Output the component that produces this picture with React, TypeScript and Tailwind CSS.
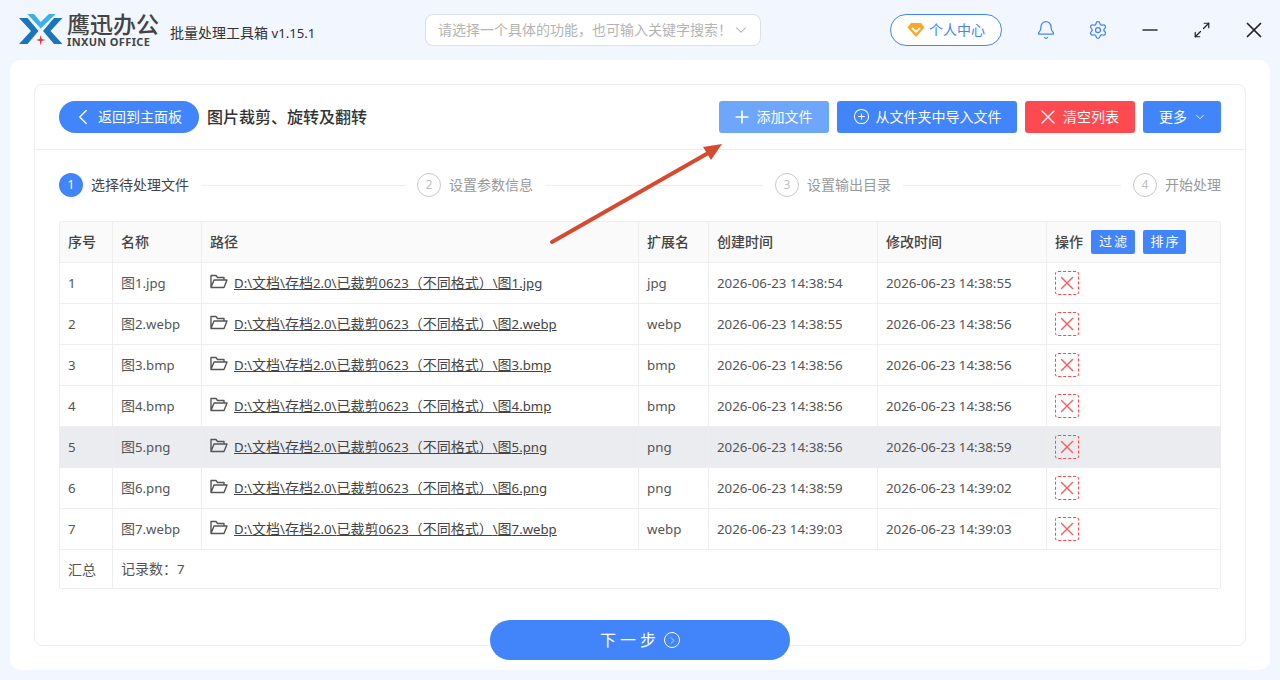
import { Bell, ChevronDown, ChevronLeft, CirclePlus, Maximize2, Minus, Plus, Settings, X, ChevronRight } from "lucide-react";

const rows = [
  ["1", "图1.jpg", "jpg", "2026-06-23 14:38:54", "2026-06-23 14:38:55"],
  ["2", "图2.webp", "webp", "2026-06-23 14:38:55", "2026-06-23 14:38:56"],
  ["3", "图3.bmp", "bmp", "2026-06-23 14:38:56", "2026-06-23 14:38:56"],
  ["4", "图4.bmp", "bmp", "2026-06-23 14:38:56", "2026-06-23 14:38:56"],
  ["5", "图5.png", "png", "2026-06-23 14:38:56", "2026-06-23 14:38:59"],
  ["6", "图6.png", "png", "2026-06-23 14:38:59", "2026-06-23 14:39:02"],
  ["7", "图7.webp", "webp", "2026-06-23 14:39:03", "2026-06-23 14:39:03"],
];

const gridCols = "grid grid-cols-[53px_89px_437px_70px_169px_169px_1fr]";
const cell = "flex items-center px-2 border-r border-[#eeeeee] last:border-r-0 min-w-0 whitespace-nowrap";

function Mix({ text }: { text: string }) {
  const parts = text.split(/([\u3000-\u9fff\uff00-\uffef]+)/).filter(Boolean);
  return (
    <>
      {parts.map((p, i) =>
        /[\u3000-\u9fff\uff00-\uffef]/.test(p) ? (
          <span key={i} className="text-[14px]">{p}</span>
        ) : (
          <span key={i} className="text-[13.2px]">{p}</span>
        )
      )}
    </>
  );
}

function Logo() {
  return (
    <svg width="45" height="32" viewBox="0 0 45 32" className="shrink-0">
      <path d="M9.3 0 L16 0 L22.7 8 L31 0 L37.7 0 L22.7 14.5 Z" fill="#3fb0e6" />
      <path d="M1 4 L9.5 4 L20.5 17 L9.5 30 L1 30 L13 17 Z" fill="#1a75bb" />
      <path d="M44.5 4 L36 4 L25 17 L36 30 L44.5 30 L32.5 17 Z" fill="#1a75bb" />
      <path d="M22.7 21 L23.7 25 L27.5 26 L23.7 27 L22.7 31.5 L21.7 27 L18 26 L21.7 25 Z" fill="#e8333a" />
    </svg>
  );
}

function FolderIcon() {
  return (
    <svg width="18" height="15" viewBox="0 0 18 15" className="shrink-0 mb-[3px]">
      <path d="M1 13.5 V1.5 H6 L7.5 3.5 H14 V6 M1 13.5 L4 6 H17 L14 13.5 Z" fill="none" stroke="#555555" strokeWidth="1.4" strokeLinejoin="round" />
    </svg>
  );
}

function Step({ n, label, active, last }: { n: string; label: string; active?: boolean; last?: boolean }) {
  return (
    <div className={last ? "flex items-center shrink-0" : "flex items-center w-[358px] shrink-0"}>
      <div
        className={
          active
            ? "w-6 h-6 rounded-full bg-[#4285fb] text-white text-[12px] flex items-center justify-center shrink-0"
            : "w-6 h-6 rounded-full border border-[#c8c8c8] text-[#c0c0c0] text-[12px] flex items-center justify-center shrink-0"
        }
      >
        {n}
      </div>
      <span className={active ? "ml-2 mb-[2px] text-[14px] text-[#444444] whitespace-nowrap" : "ml-2 mb-[2px] text-[14px] text-[#999999] whitespace-nowrap"}>{label}</span>
      {!last && <div className="flex-1 h-px bg-[#eeeeee] mx-3" />}
    </div>
  );
}

export default function App() {
  return (
    <div
      className="relative w-[1280px] h-[680px] overflow-hidden bg-[#f2f6fe] flex flex-col"
      style={{ fontFamily: '"Noto Sans", "Noto Sans CJK SC", sans-serif' }}
    >
      <header className="h-[60px] shrink-0 flex items-center pl-[18px]">
        <Logo />
        <div className="ml-[4px] flex flex-col w-[95px]">
          <span className="text-[23px] leading-[23px] font-medium text-[#444444] whitespace-nowrap">鹰迅办公</span>
          <span className="text-[11px] leading-[11px] font-bold text-[#444444] tracking-[0.35px] whitespace-nowrap">INXUN OFFICE</span>
        </div>
        <span className="ml-[8px] mt-[3px] w-[145px] text-[#333333] whitespace-nowrap"><Mix text="批量处理工具箱 v1.15.1" /></span>
        <div className="ml-[110px] w-[336px] h-[32px] bg-white border border-[#dcdfe6] rounded-lg flex items-center pl-3 pr-[10px] justify-between">
          <span className="mb-[2px] text-[14px] text-[#b4b4b4] whitespace-nowrap">请选择一个具体的功能，也可输入关键字搜索！</span>
          <ChevronDown size={18} className="text-[#aaaaaa] shrink-0" strokeWidth={1.4} />
        </div>
        <div className="ml-[129px] w-[112px] h-[32px] bg-white border border-[#4285fb] rounded-full flex items-center justify-center gap-[4px]">
          <svg width="18" height="16" viewBox="0 0 18 16">
            <path d="M4 1 H14 L17.5 5.5 L9 15 L0.5 5.5 Z" fill="#f9a825" />
            <path d="M5 6 L9 10 L13 6" fill="none" stroke="#fff" strokeWidth="1.8" />
          </svg>
          <span className="mb-[2px] text-[14px] text-[#4285fb] whitespace-nowrap">个人中心</span>
        </div>
        <Bell size={20} strokeWidth={1.5} className="ml-[34px] text-[#4285fb]" />
        <Settings size={20} strokeWidth={1.5} className="ml-[32px] text-[#4285fb]" />
        <Minus size={24} strokeWidth={1.6} className="ml-[30px] text-[#333333]" />
        <Maximize2 size={18} strokeWidth={1.6} className="ml-[31px] text-[#222222]" />
        <X size={26} strokeWidth={1.6} className="ml-[30px] text-[#222222]" />
      </header>

      <main className="mx-[10px] h-[610px] bg-white rounded-[10px] p-6">
        <div className="h-[562px] border border-[#eeeeee] rounded-lg flex flex-col">
          <div className="h-[65px] shrink-0 border-b border-[#eeeeee] flex items-center px-6 pb-[1px]">
            <button className="w-[140px] h-[32px] rounded-full bg-[#4285fb] text-white text-[14px] flex items-center pl-[11px] gap-[2px]">
              <ChevronLeft size={26} strokeWidth={1.3} />
              <span>返回到主面板</span>
            </button>
            <h1 className="ml-2 text-[16px] font-medium text-[#333333] whitespace-nowrap">图片裁剪、旋转及翻转</h1>
            <div className="ml-auto flex items-center gap-2">
              <button className="w-[110px] h-[32px] rounded-[3px] bg-[#6ea6fc] text-white text-[14px] flex items-center justify-center gap-[5px] pr-[4px]">
                <Plus size={20} strokeWidth={2} />
                <span>添加文件</span>
              </button>
              <button className="w-[180px] h-[32px] rounded-[3px] bg-[#4285fb] text-white text-[14px] flex items-center justify-center gap-[6px]">
                <CirclePlus size={17} strokeWidth={1.5} />
                <span>从文件夹中导入文件</span>
              </button>
              <button className="w-[110px] h-[32px] rounded-[3px] bg-[#fd4a50] text-white text-[14px] flex items-center justify-center gap-[3px] pr-[5px]">
                <X size={24} strokeWidth={1.4} />
                <span>清空列表</span>
              </button>
              <button className="w-[78px] h-[32px] rounded-[3px] bg-[#4285fb] text-white text-[14px] flex items-center justify-center gap-[6px] pl-[2px]">
                <span>更多</span>
                <ChevronDown size={14} strokeWidth={1.4} />
              </button>
            </div>
          </div>

          <div className="h-[70px] mb-px shrink-0 flex items-center px-6">
            <Step n="1" label="选择待处理文件" active />
            <Step n="2" label="设置参数信息" />
            <Step n="3" label="设置输出目录" />
            <Step n="4" label="开始处理" last />
          </div>

          <div className="mx-6 border border-[#eeeeee] rounded-[2px] text-[13.3px] text-[#555555]">
            <div className={`${gridCols} h-[41px] bg-[#fafafa] border-b border-[#eeeeee] font-medium text-[14px] text-[#444444]`}>
              <div className={cell}><span className="mb-[2px]">序号</span></div>
              <div className={cell}><span className="mb-[2px]">名称</span></div>
              <div className={cell}><span className="mb-[2px]">路径</span></div>
              <div className={cell}><span className="mb-[2px]">扩展名</span></div>
              <div className={cell}><span className="mb-[2px]">创建时间</span></div>
              <div className={cell}><span className="mb-[2px]">修改时间</span></div>
              <div className={cell}>
                <span className="mb-[2px]">操作</span>
                <span className="ml-[8px] w-[44px] h-[24px] rounded-[2px] bg-[#4285fb] text-white text-[13px] font-normal tracking-[2px] pl-[2px] flex items-center justify-center">过滤</span>
                <span className="ml-2 w-[43px] h-[24px] rounded-[2px] bg-[#4285fb] text-white text-[13px] font-normal tracking-[2px] pl-[2px] flex items-center justify-center">排序</span>
              </div>
            </div>
            {rows.map((r) => (
              <div
                key={r[0]}
                className={
                  r[0] === "5"
                    ? `${gridCols} h-[41px] border-b border-[#eeeeee] bg-[#ebecf0]`
                    : `${gridCols} h-[41px] border-b border-[#eeeeee]`
                }
              >
                <div className={cell}><span className="mt-[2px]">{r[0]}</span></div>
                <div className={cell}><span><Mix text={r[1]} /></span></div>
                <div className={cell}>
                  <FolderIcon />
                  <span className="ml-[6px] underline text-[#444444]"><Mix text={`D:\\文档\\存档2.0\\已裁剪0623（不同格式）\\${r[1]}`} /></span>
                </div>
                <div className={cell}><span className="mt-[2px]">{r[2]}</span></div>
                <div className={cell}><span className="mt-[2px]">{r[3]}</span></div>
                <div className={cell}><span className="mt-[2px]">{r[4]}</span></div>
                <div className={cell}>
                  <span className="w-6 h-6 rounded-[3px] border border-dashed border-[#fd4a50] flex items-center justify-center">
                    <X size={22} strokeWidth={1.5} className="text-[#fd5a60] shrink-0" />
                  </span>
                </div>
              </div>
            ))}
            <div className="flex h-[38px]">
              <div className="w-[53px] flex items-center px-2 border-r border-[#eeeeee] text-[14px]">汇总</div>
              <div className="flex items-center px-2"><span><Mix text="记录数：7" /></span></div>
            </div>
          </div>

          <div className="flex-1 flex justify-center pt-[31px]">
            <button className="w-[300px] h-[40px] rounded-full bg-[#4285fb] text-white text-[16px] tracking-[4px] flex items-center justify-center gap-[4px] relative z-10">
              <span>下一步</span>
              <span className="w-4 h-4 rounded-full border border-white flex items-center justify-center">
                <ChevronRight size={11} strokeWidth={1.5} />
              </span>
            </button>
          </div>
        </div>
      </main>

      <svg className="absolute left-0 top-0 pointer-events-none" width="1280" height="680">
        <line x1="552" y1="242" x2="710" y2="152" stroke="#d64a30" strokeWidth="4" strokeLinecap="round" />
        <path d="M722 144 L703 147 L711 160 Z" fill="#d64a30" />
      </svg>
    </div>
  );
}
